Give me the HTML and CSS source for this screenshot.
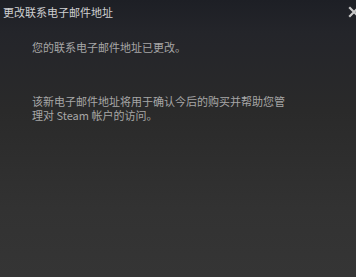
FILE: index.html
```html
<!DOCTYPE html>
<html lang="zh-CN">
<head>
    <meta charset="UTF-8">
    <meta name="viewport" content="width=device-width, initial-scale=1.0">
    <title>更改联系电子邮件地址</title>

    <link rel="stylesheet" href="styles.css">
</head>
<body>
    <div class="dialog">
        <div class="dialog-header">
            <div class="dialog-title">更改联系电子邮件地址</div>
            <svg class="dialog-close" width="12" height="12" viewBox="0 0 12 12">
                <path d="M2 2 L10 10 M10 2 L2 10" stroke="#c8c8c8" stroke-width="2.2" stroke-linecap="square"/>
            </svg>
        </div>
        <div class="dialog-body">
            <p class="dialog-text">您的联系电子邮件地址已更改。</p>
            <p class="dialog-text">该新电子邮件地址将用于确认今后的购买并帮助您管理对 Steam 帐户的访问。</p>
        </div>
    </div>
</body>
</html>
```

FILE: styles.css
```css
body {
    margin: 0;
    padding: 0;
    overflow: hidden;
    background: #343434;
}

.dialog {
    height: 277px;
    background: linear-gradient(to bottom, #1d1f25 0%, #24252a 12%, #2a2a2a 40%, #323232 75%, #353535 100%);
    font-family: "Noto Sans CJK SC", "Liberation Sans", sans-serif;
}

.dialog-header {
    display: flex;
    justify-content: space-between;
    align-items: center;
    padding: 3px 0 0 3px;
    height: 17px;
}

.dialog-title {
    font-size: 11px;
    line-height: 14px;
    color: #cfd0d2;
}

.dialog-close {
    margin-right: -4px;
}

.dialog-body {
    padding: 20px 66px 0 32px;
}

.dialog-text {
    margin: 0 0 40px;
    font-size: 11px;
    line-height: 14px;
    color: #a7a7a7;
}
```
